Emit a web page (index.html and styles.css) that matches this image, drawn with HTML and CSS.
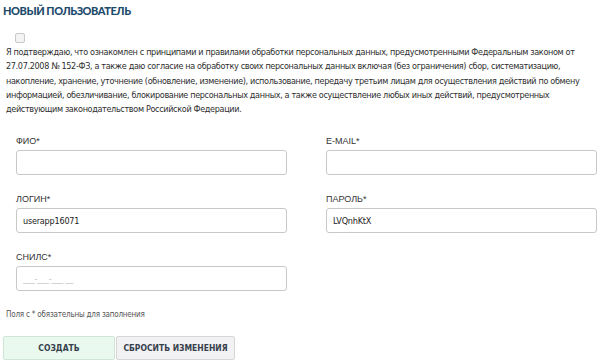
FILE: index.html
```html
<!DOCTYPE html>
<html lang="ru">
<head>
  <meta charset="UTF-8">
  <meta name="viewport" content="width=device-width, initial-scale=1.0">
  <title>Новый пользователь</title>
  <link rel="stylesheet" href="styles.css">
</head>
<body>
  <div class="page">
    <h1 class="page-title">Новый пользователь</h1>

    <div class="consent">
      <input type="checkbox" id="consentCheck" class="consent-check">
      <label for="consentCheck" class="consent-text">Я подтверждаю, что ознакомлен с принципами и правилами обработки персональных данных, предусмотренными Федеральным законом от 27.07.2008 № 152-ФЗ, а также даю согласие на обработку своих персональных данных включая (без ограничения) сбор, систематизацию, накопление, хранение, уточнение (обновление, изменение), использование, передачу третьим лицам для осуществления действий по обмену информацией, обезличивание, блокирование персональных данных, а также осуществление любых иных действий, предусмотренных действующим законодательством Российской Федерации.</label>
    </div>

    <div class="form-grid">
      <div class="field">
        <label for="fio" class="field-label">ФИО*</label>
        <input id="fio" type="text" class="field-input">
      </div>
      <div class="field">
        <label for="email" class="field-label">E-MAIL*</label>
        <input id="email" type="text" class="field-input">
      </div>
      <div class="field">
        <label for="login" class="field-label">ЛОГИН*</label>
        <input id="login" type="text" class="field-input" value="userapp16071">
      </div>
      <div class="field">
        <label for="password" class="field-label">ПАРОЛЬ*</label>
        <input id="password" type="text" class="field-input" value="LVQnhKtX">
      </div>
      <div class="field">
        <label for="snils" class="field-label">СНИЛС*</label>
        <input id="snils" type="text" class="field-input" placeholder="___-___-___ __">
      </div>
    </div>

    <p class="required-note">Поля с * обязательны для заполнения</p>

    <div class="button-row">
      <button class="btn btn-create">Создать</button>
      <button class="btn btn-reset">Сбросить изменения</button>
    </div>
  </div>
</body>
</html>
```

FILE: styles.css
```css
body {
  margin: 0;
  font-family: "DejaVu Sans Condensed", Lato, sans-serif;
  color: #333;
  background: #fff;
}

.page {
  padding: 3px 3px 0 3px;
}

.page-title {
  margin: 0;
  font-family: Lato, sans-serif;
  font-size: 11px;
  line-height: 16px;
  font-weight: 900;
  letter-spacing: -0.45px;
  text-transform: uppercase;
  color: #1d4b6c;
}

.consent {
  display: flex;
  flex-direction: column;
  align-items: flex-start;
  padding-left: 3px;
}

.consent-check {
  appearance: none;
  -webkit-appearance: none;
  width: 10px;
  height: 10px;
  margin: 14px 0 0 9px;
  border: 1px solid #c9c9c9;
  border-radius: 2px;
  background: #f3f3f3;
}

.consent-text {
  margin-top: 2px;
  font-size: 9px;
  line-height: 14.3px;
  letter-spacing: -0.34px;
  color: #2e2e2e;
}

.form-grid {
  display: grid;
  grid-template-columns: 1fr 1fr;
  column-gap: 39px;
  row-gap: 18px;
  padding-left: 13px;
  margin-top: 19px;
}

.field {
  display: flex;
  flex-direction: column;
  gap: 3px;
}

.field-label {
  font-family: "Liberation Sans", Arial, sans-serif;
  font-size: 9px;
  line-height: 12px;
  color: #333;
}

.field-input {
  box-sizing: border-box;
  height: 25px;
  padding: 0 6px;
  border: 1px solid #c8c8c8;
  border-radius: 3px;
  font-family: "DejaVu Sans Condensed", Lato, sans-serif;
  font-size: 9px;
  letter-spacing: -0.2px;
  color: #222;
}

.field-input::placeholder {
  color: #c4c4c4;
}

.required-note {
  margin: 18px 0 0 3px;
  font-size: 8px;
  line-height: 12px;
  letter-spacing: -0.2px;
  color: #555;
}

.button-row {
  display: flex;
  gap: 1px;
  margin-top: 15px;
}

.btn {
  height: 24px;
  padding: 0;
  border: 1px solid #d6d6d6;
  border-radius: 2px;
  font-family: "DejaVu Sans Condensed", sans-serif;
  font-size: 8.5px;
  font-weight: 700;
  white-space: nowrap;
  text-transform: uppercase;
  color: #36404b;
  cursor: pointer;
}

.btn-create {
  width: 112px;
  background: #e9f9ef;
  border-color: #cfe6d7;
}

.btn-reset {
  width: 119px;
  background: #f2f2f4;
}
```
